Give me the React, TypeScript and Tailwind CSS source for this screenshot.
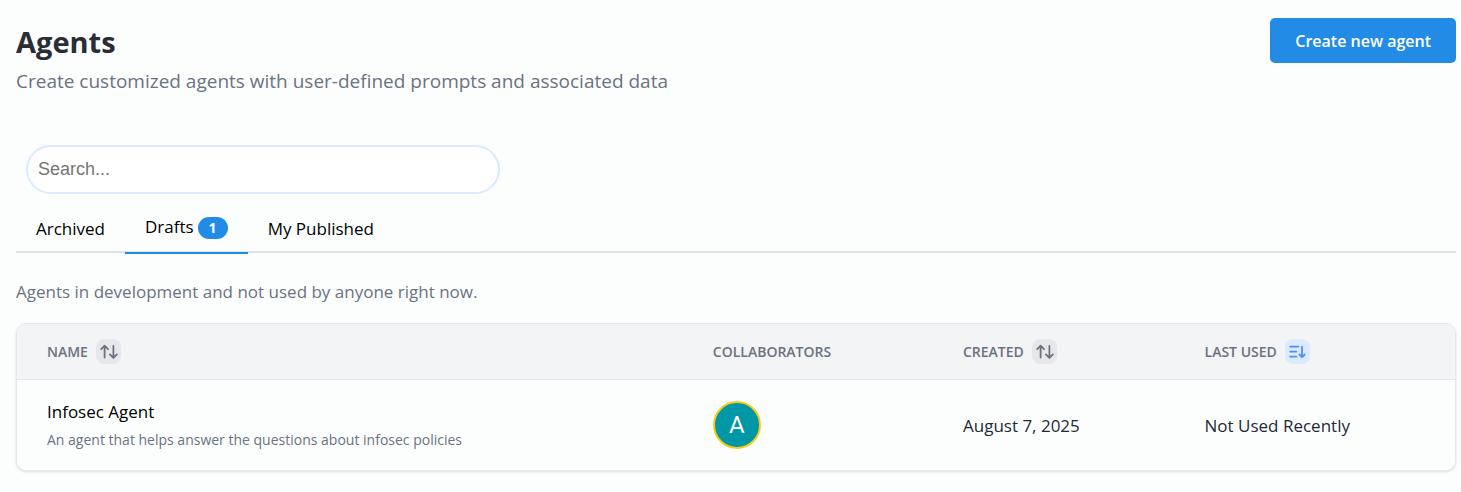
import { useState } from "react";

type Agent = {
  name: string;
  description: string;
  initial: string;
  created: string;
  lastUsed: string;
};

const agents: Agent[] = [
  {
    name: "Infosec Agent",
    description: "An agent that helps answer the questions about infosec policies",
    initial: "A",
    created: "August 7, 2025",
    lastUsed: "Not Used Recently",
  },
];

function SortBothIcon() {
  return (
    <svg viewBox="0 0 25 25" className="size-[25px]" fill="none" stroke="currentColor" strokeWidth="1.8" strokeLinecap="round" strokeLinejoin="round" aria-hidden="true">
      <path d="M8.6 18.6V6.8M5.2 10.2L8.6 6.7L12 10.2" />
      <path d="M17.4 6.8V18.6M13.9 15.4L17.4 18.9L20.9 15.4" />
    </svg>
  );
}

function SortDescIcon() {
  return (
    <svg viewBox="0 0 25 25" className="size-[25px]" fill="none" stroke="currentColor" strokeWidth="1.8" strokeLinecap="round" strokeLinejoin="round" aria-hidden="true">
      <path d="M5.2 7.6H13.4M5.2 12.6H11.4M5.2 17.6H11.4" />
      <path d="M17 7.6V18.2M14.3 15.5L17 18.2L19.7 15.5" />
    </svg>
  );
}

function SortButton({ label, active = false }: { label: string; active?: boolean }) {
  return (
    <button
      type="button"
      aria-label={label}
      className={
        active
          ? "rounded-lg bg-blue-100 text-[#4f8ef7]"
          : "rounded-lg bg-[#e5e7eb] text-[#6b7280]"
      }
    >
      {active ? <SortDescIcon /> : <SortBothIcon />}
    </button>
  );
}

const cell = "px-[30px] text-left";

export default function App() {
  const [query, setQuery] = useState("");

  return (
    <main className="min-h-screen bg-[#fcfefe] pt-[18px] pr-[5px] pb-5 pl-4 font-['Open_Sans','Noto_Sans',sans-serif] text-[17px] leading-6 text-black">
      <header className="flex items-start justify-between">
        <div className="pt-2">
          <h1 className="text-[29px] leading-8 font-bold text-[#2b2d35]">Agents</h1>
          <p className="pt-[9px] text-[19px] leading-7 text-[#6b7280]">
            Create customized agents with user-defined prompts and associated data
          </p>
        </div>
        <button type="button" className="h-[45px] rounded-[5px] bg-[#228be6] px-[25px] text-base font-semibold text-white">
          Create new agent
        </button>
      </header>

      <div className="mt-[50px] ml-[10px]">
        <input
          type="text"
          aria-label="Search"
          placeholder="Search..."
          value={query}
          onChange={(e) => setQuery(e.target.value)}
          className="block h-[49px] w-[474px] max-w-full rounded-full border-2 border-blue-100 bg-white px-[10px] font-['Liberation_Sans',sans-serif] text-lg outline-none placeholder:text-[#757575]"
        />
      </div>

      <nav role="tablist" className="mt-3 flex items-stretch border-b-2 border-[#dee2e6]">
        <button type="button" role="tab" aria-selected="false" className="px-5">
          Archived
        </button>
        <button
          type="button"
          role="tab"
          aria-selected="true"
          className="-mb-[3px] flex h-12 items-center gap-1 border-b-2 border-[#228be6] px-5 pb-0.5"
        >
          <span className="pb-0.5">Drafts</span>
          <span className="rounded-full bg-[#228be6] px-[11px] text-sm leading-[22px] font-bold text-white">1</span>
        </button>
        <button type="button" role="tab" aria-selected="false" className="px-5">
          My Published
        </button>
      </nav>

      <p className="mt-[27px] text-[#6b7280]">Agents in development and not used by anyone right now.</p>

      <div className="mt-[19px] overflow-hidden rounded-[10px] border border-[#e5e7eb] shadow-sm">
        <table className="w-full table-fixed border-collapse">
          <thead className="bg-[#f3f4f6] text-sm text-[#6b7280]">
            <tr className="h-[55px] border-b border-[#e5e7eb]">
              <th scope="col" className={`${cell} w-[46.3%] pt-px font-semibold`}>
                <div className="flex items-center gap-2">
                  NAME <SortButton label="Sort by name" />
                </div>
              </th>
              <th scope="col" className={`${cell} w-[17.4%] pt-px font-semibold`}>COLLABORATORS</th>
              <th scope="col" className={`${cell} w-[16.8%] pt-px font-semibold`}>
                <div className="flex items-center gap-2">
                  CREATED <SortButton label="Sort by created" />
                </div>
              </th>
              <th scope="col" className={`${cell} pt-px font-semibold`}>
                <div className="flex items-center gap-2">
                  LAST USED <SortButton label="Sort by last used" active />
                </div>
              </th>
            </tr>
          </thead>
          <tbody>
            {agents.map((agent) => (
              <tr key={agent.name} className="h-[91px] text-[#1f2937]">
                <td className={`${cell} pt-[3px]`}>
                  <div className="text-black">{agent.name}</div>
                  <div className="pt-1 text-sm leading-6 text-[#6b7280]">{agent.description}</div>
                </td>
                <td className={cell}>
                  <span className="flex size-12 items-center justify-center rounded-full border-2 border-[#facc15] bg-[#0097a7] font-['Roboto',sans-serif] text-2xl text-white">
                    {agent.initial}
                  </span>
                </td>
                <td className={`${cell} pt-[3px]`}>{agent.created}</td>
                <td className={`${cell} pt-[3px]`}>{agent.lastUsed}</td>
              </tr>
            ))}
          </tbody>
        </table>
      </div>
    </main>
  );
}
